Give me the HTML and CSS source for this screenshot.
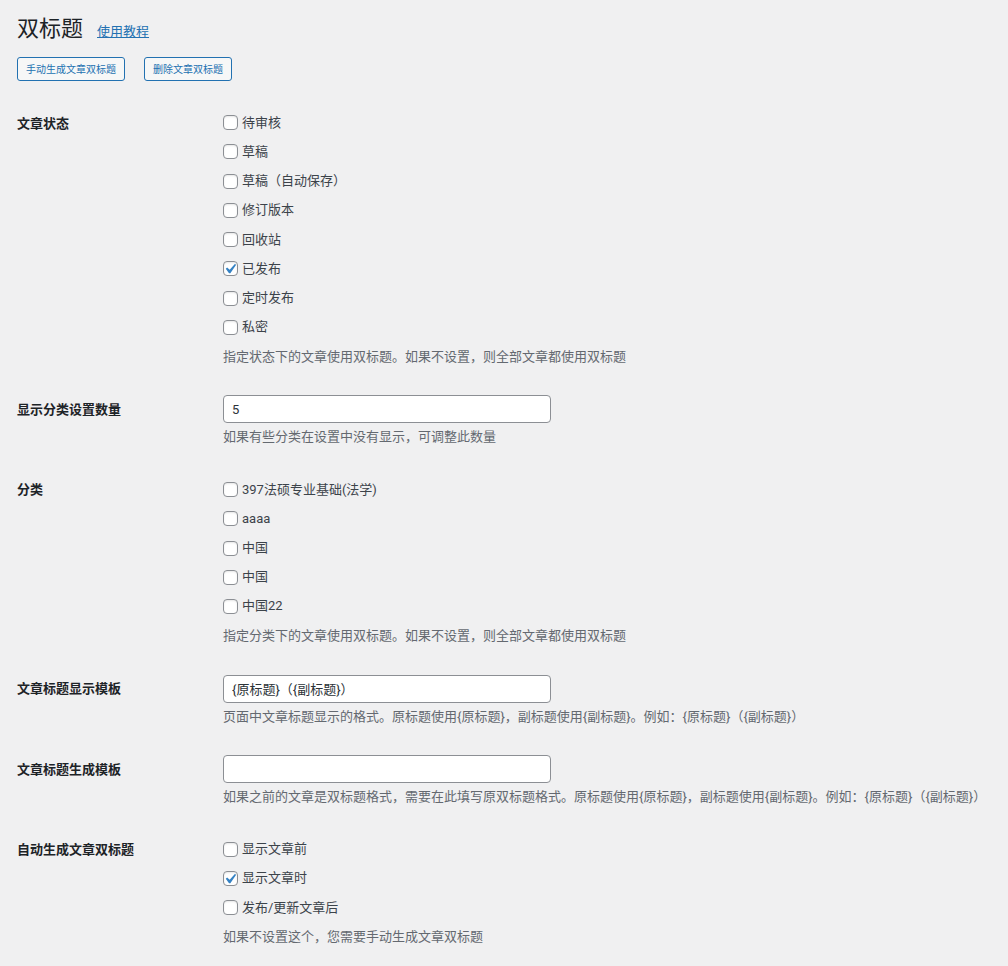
FILE: index.html
```html
<!DOCTYPE html>
<html lang="zh-CN">
<head>
    <meta charset="UTF-8">
    <title>双标题</title>
    <link rel="stylesheet" href="styles.css">
</head>
<body>
<div class="wrap">
    <div class="page-head">
        <h1>双标题</h1>
        <a href="#" class="help-link">使用教程</a>
    </div>
    <div class="actions">
        <button type="button" class="btn">手动生成文章双标题</button>
        <button type="button" class="btn">删除文章双标题</button>
    </div>

    <form class="settings">
        <div class="field-row">
            <div class="field-label">文章状态</div>
            <div class="field-body">
                <label class="check"><input type="checkbox">待审核</label>
                <label class="check"><input type="checkbox">草稿</label>
                <label class="check"><input type="checkbox">草稿（自动保存）</label>
                <label class="check"><input type="checkbox">修订版本</label>
                <label class="check"><input type="checkbox">回收站</label>
                <label class="check"><input type="checkbox" checked>已发布</label>
                <label class="check"><input type="checkbox">定时发布</label>
                <label class="check"><input type="checkbox">私密</label>
                <p class="description">指定状态下的文章使用双标题。如果不设置，则全部文章都使用双标题</p>
            </div>
        </div>

        <div class="field-row">
            <div class="field-label">显示分类设置数量</div>
            <div class="field-body">
                <input type="text" class="text-input" value="5">
                <p class="description">如果有些分类在设置中没有显示，可调整此数量</p>
            </div>
        </div>

        <div class="field-row">
            <div class="field-label">分类</div>
            <div class="field-body">
                <label class="check"><input type="checkbox">397法硕专业基础(法学)</label>
                <label class="check"><input type="checkbox">aaaa</label>
                <label class="check"><input type="checkbox">中国</label>
                <label class="check"><input type="checkbox">中国</label>
                <label class="check"><input type="checkbox">中国22</label>
                <p class="description">指定分类下的文章使用双标题。如果不设置，则全部文章都使用双标题</p>
            </div>
        </div>

        <div class="field-row">
            <div class="field-label">文章标题显示模板</div>
            <div class="field-body">
                <input type="text" class="text-input" value="{原标题}（{副标题}）">
                <p class="description">页面中文章标题显示的格式。原标题使用{原标题}，副标题使用{副标题}。例如：{原标题}（{副标题}）</p>
            </div>
        </div>

        <div class="field-row">
            <div class="field-label">文章标题生成模板</div>
            <div class="field-body">
                <input type="text" class="text-input" value="">
                <p class="description">如果之前的文章是双标题格式，需要在此填写原双标题格式。原标题使用{原标题}，副标题使用{副标题}。例如：{原标题}（{副标题}）</p>
            </div>
        </div>

        <div class="field-row">
            <div class="field-label">自动生成文章双标题</div>
            <div class="field-body">
                <label class="check"><input type="checkbox">显示文章前</label>
                <label class="check"><input type="checkbox" checked>显示文章时</label>
                <label class="check"><input type="checkbox">发布/更新文章后</label>
                <p class="description">如果不设置这个，您需要手动生成文章双标题</p>
            </div>
        </div>
    </form>
</div>
</body>
</html>
```

FILE: styles.css
```css
body {
    margin: 0;
    background: #f0f0f1;
    color: #3c434a;
    font-family: Roboto, "Noto Sans CJK SC", sans-serif;
    font-size: 13px;
    line-height: 1.4;
}
.wrap {
    padding: 4px 10px 0 17px;
}
.page-head {
    display: flex;
    align-items: baseline;
    padding: 11px 0 4px;
}
.page-head h1 {
    margin: 0;
    font-size: 22px;
    font-weight: 400;
    line-height: 1.3;
    color: #1d2327;
}
.help-link {
    margin-left: 14px;
    color: #2271b1;
    font-size: 13px;
}
.actions {
    display: flex;
    gap: 19px;
    margin-top: 9px;
}
.btn {
    box-sizing: border-box;
    height: 24px;
    padding: 0 8px;
    font-family: "Noto Sans CJK SC", sans-serif;
    font-size: 10px;
    line-height: 22px;
    color: #2271b1;
    background: #f6f7f7;
    border: 1px solid #2271b1;
    border-radius: 3px;
    cursor: pointer;
}
.settings {
    margin-top: 14px;
}
.field-row {
    display: grid;
    grid-template-columns: 206px 1fr;
}
.field-label {
    padding: 21px 10px 0 0;
    font-weight: 600;
    line-height: 1.3;
    color: #1d2327;
}
.field-body {
    display: flex;
    flex-direction: column;
    align-items: flex-start;
    padding: 14.5px 0;
}
.check {
    display: flex;
    align-items: center;
    height: 18.2px;
    margin: 4.55px 0 6.5px;
    cursor: pointer;
}
.check input {
    appearance: none;
    -webkit-appearance: none;
    box-sizing: border-box;
    width: 15px;
    height: 15px;
    margin: 0 4px 0 0;
    border: 1px solid #8c8f94;
    border-radius: 4px;
    background: #fff;
    box-shadow: inset 0 1px 2px rgba(0, 0, 0, 0.1);
}
.check input:checked {
    background: #fff url("data:image/svg+xml;utf8,<svg xmlns='http://www.w3.org/2000/svg' viewBox='0 0 20 20'><path d='M14.83 4.89l1.34.94-5.81 8.38H9.02L5.78 9.67l1.34-1.25 2.57 2.4z' fill='%233582c4'/></svg>") no-repeat -4px -3px / 20px 20px;
}
.text-input {
    box-sizing: border-box;
    width: 328px;
    height: 28px;
    padding: 0 8px;
    font-family: inherit;
    font-size: 13px;
    color: #2c3338;
    background: #fff;
    border: 1px solid #8c8f94;
    border-radius: 4px;
}
.description {
    margin: 4px 0 0;
    line-height: 1.5;
    color: #646970;
    white-space: nowrap;
}
```
